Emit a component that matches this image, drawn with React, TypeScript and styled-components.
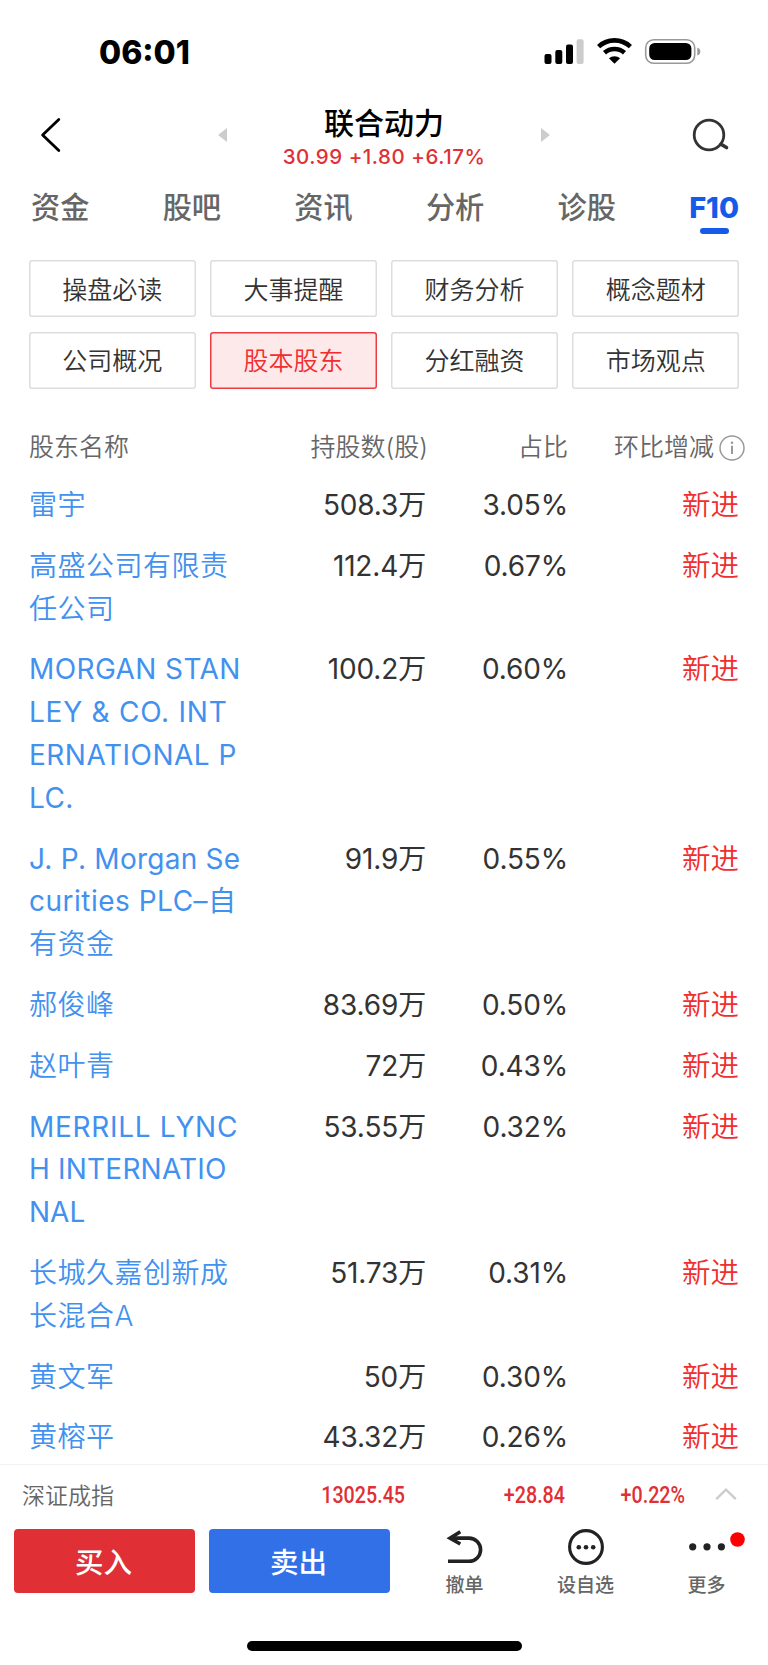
import React from "react";
import styled, { createGlobalStyle } from "styled-components";

const Global = createGlobalStyle`
  * { box-sizing: border-box; }
  body {
    margin: 0;
    background: #fff;
    font-family: Inter, "Noto Sans CJK SC", sans-serif;
    color: #333;
  }
`;

const Screen = styled.div`
  width: 768px;
  height: 1665px;
  display: flex;
  flex-direction: column;
  overflow: hidden;
  white-space: nowrap;
  > * { flex-shrink: 0; }
`;

const StatusBar = styled.header`
  height: 104px;
  padding: 0 67px 0 99px;
  display: flex;
  align-items: center;
  justify-content: space-between;
`;

const Clock = styled.div`
  font-size: 32px;
  font-weight: 800;
  line-height: 40px;
  padding-top: 2px;
  color: #000;
`;

const NavBar = styled.nav`
  height: 70px;
  padding: 0 39px 0 39px;
  display: grid;
  grid-template-columns: 24px 1fr 38px;
  align-items: center;
  > svg { margin-bottom: 8px; }
`;

const Stepper = styled.div`
  width: 332px;
  margin-left: 155px;
  display: flex;
  align-items: center;
  justify-content: space-between;
  > svg { margin-bottom: 8px; }
`;

const Title = styled.div`
  display: flex;
  flex-direction: column;
  align-items: center;
  padding-bottom: 2px;
`;

const StockName = styled.div`
  font-size: 30px;
  font-weight: 500;
  line-height: 38px;
  color: #000;
`;

const Quote = styled.div`
  font-size: 20.5px;
  font-weight: 500;
  line-height: 30px;
  letter-spacing: 0.52px;
  color: #e03035;
`;

const Tabs = styled.div`
  height: 73px;
  padding: 1px 29px 0 31px;
  display: flex;
  justify-content: space-between;
`;

const Tab = styled.div<{ $active?: boolean }>`
  display: flex;
  flex-direction: column;
  align-items: center;
  font-size: ${(p) => (p.$active ? "29px" : "29.2px")};
  font-weight: ${(p) => (p.$active ? 800 : 500)};
  line-height: 66px;
  color: ${(p) => (p.$active ? "#155be8" : "#666")};
`;

const TabMark = styled.span`
  width: 29px;
  height: 6px;
  margin-top: -13px;
  border-radius: 3px;
  background: #155be8;
`;

const Sections = styled.div`
  margin: 13px 29px 0;
  padding-top: 0.3px;
  display: grid;
  grid-template-columns: repeat(4, 1fr);
  grid-auto-rows: 57px;
  gap: 14.5px;
`;

const Section = styled.div<{ $active?: boolean }>`
  display: flex;
  align-items: center;
  justify-content: center;
  padding-bottom: 2px;
  border-radius: 3px;
  font-size: 25px;
  font-weight: 350;
  color: ${(p) => (p.$active ? "#f02d2f" : "#333")};
  background: ${(p) => (p.$active ? "#fee9ea" : "#fff")};
  box-shadow: inset 0 0 0 1.5px ${(p) => (p.$active ? "#ec3c40" : "#ddd")};
`;

const Table = styled.section`
  flex: 1 1 0;
  min-height: 0;
  margin-top: 29.7px;
`;

const Row = styled.div`
  display: grid;
  grid-template-columns: 230px 167px 142px 171px;
  padding: 9px 0 9px 29px;
  font-size: 28.5px;
  font-weight: 350;
  line-height: 42.8px;
`;

const HeadRow = styled(Row)`
  height: 56.6px;
  padding-top: 8px;
  font-size: 25px;
  color: #666;
`;

const Cell = styled.div`
  text-align: right;
`;

const SharesHead = styled(Cell)`
  margin-right: -2px;
`;

const Figure = styled(Cell)`
  font-size: 28px;
  font-weight: 400;
  letter-spacing: -0.15px;
`;

const HeadLast = styled.div`
  display: flex;
  align-items: center;
  gap: 5px;
  padding-left: 46px;
  svg { flex-shrink: 0; }
`;

const Name = styled.div`
  color: #4291ef;
  font-size: 28px;
`;

const NameLine = styled.div<{ $track: number; $latin: boolean }>`
  font-weight: ${(p) => (p.$latin ? 400 : 350)};
  letter-spacing: ${(p) => p.$track}px;
`;

const Change = styled(Cell)`
  color: #f02d2f;
`;

const IndexBar = styled.div`
  height: 65px;
  border-top: 1px solid #f2f2f2;
  padding: 0 31px 6px 22px;
  display: grid;
  grid-template-columns: 220px 163px 160px 120px 1fr;
  align-items: center;
  font-size: 23px;
  font-weight: 350;
  color: #666;
  svg { justify-self: end; }
`;

const IndexValue = styled.div`
  font-family: Roboto, sans-serif;
  font-size: 24px;
  font-weight: 500;
  line-height: 30px;
  padding-top: 1px;
  text-align: right;
  color: #e03035;
  transform: scaleX(0.82);
  transform-origin: right center;
`;

const ActionBar = styled.div`
  height: 64px;
  padding-left: 14px;
  display: flex;
`;

const Trade = styled.div<{ $color: string }>`
  width: 181px;
  margin-right: 14px;
  padding: 0 2px 1px 0;
  display: flex;
  align-items: center;
  justify-content: center;
  border-radius: 4px;
  background: ${(p) => p.$color};
  color: #fff;
  font-size: 28.5px;
  font-weight: 500;
`;

const Tools = styled.div`
  flex: 1;
  display: grid;
  grid-template-columns: 121px 121px 121px;
`;

const Tool = styled.div`
  display: flex;
  flex-direction: column;
  align-items: center;
  font-size: 19px;
  font-weight: 500;
  line-height: 41px;
  color: #666;
  svg { display: block; overflow: visible; }
`;

const HomeArea = styled.footer`
  height: 72px;
  display: flex;
  justify-content: center;
  padding-top: 48px;
`;

const HomeIndicator = styled.div`
  width: 275px;
  height: 10px;
  border-radius: 5px;
  background: #000;
`;

const StatusIcons = () => (
  <svg width="157" height="28" viewBox="0 0 157 28">
    <rect x="0.5" y="16" width="7" height="10" rx="2" />
    <rect x="11.3" y="12" width="7" height="14" rx="2" />
    <rect x="22" y="6.5" width="7" height="19.5" rx="2" />
    <rect x="32.6" y="1.3" width="7" height="24.7" rx="2" fill="#ccc" />
    <g fill="none" stroke="#000" strokeWidth="4.6">
      <path d="M54.6 8.6 A23.5 23.5 0 0 1 86.4 8.6" />
      <path d="M60.5 14.8 A15 15 0 0 1 80.5 14.8" />
    </g>
    <path d="M70.5 25.8 L64.9 20.3 A8.5 8.5 0 0 1 76.1 20.3 Z" />
    <rect x="101.7" y="1.7" width="49" height="23.6" rx="8" fill="none" stroke="#999" strokeWidth="1.6" />
    <rect x="105.2" y="4.9" width="42.2" height="17.2" rx="5.5" />
    <path d="M153.3 9.5 Q156.3 10.5 156.3 13.5 T153.3 17.5 Z" fill="#999" />
  </svg>
);

const BackIcon = () => (
  <svg width="24" height="38" viewBox="0 0 24 38" fill="none" stroke="#000" strokeWidth="2.8" strokeLinecap="round" strokeLinejoin="round">
    <path d="M19.8 3.4 L3.6 19 L19.8 34.6" />
  </svg>
);

const ArrowIcon = ({ flip }: { flip?: boolean }) => (
  <svg width="9" height="14" viewBox="0 0 9 14" fill="#ccc">
    <path d={flip ? "M0 0 L9 7 L0 14 Z" : "M9 0 L0 7 L9 14 Z"} />
  </svg>
);

const SearchIcon = () => (
  <svg width="38" height="36" viewBox="0 0 38 36" fill="none" stroke="#333" strokeWidth="2.8" strokeLinecap="round">
    <circle cx="18" cy="18" r="14.8" />
    <path d="M30 27.3 L35.5 30.5" strokeWidth="3.6" />
  </svg>
);

const InfoIcon = () => (
  <svg width="26" height="26" viewBox="0 0 26 26" fill="none" stroke="#999" strokeWidth="1.5">
    <circle cx="13" cy="13" r="12" />
    <path d="M13 10.8 V19" strokeWidth="2" />
    <circle cx="13" cy="7.7" r="1.3" fill="#999" stroke="none" />
  </svg>
);

const ChevronIcon = () => (
  <svg width="22" height="14" viewBox="0 0 22 14" fill="none" stroke="#ccc" strokeWidth="2.4">
    <path d="M1.2 12.2 L11 2.6 L20.8 12.2" />
  </svg>
);

const UndoIcon = () => (
  <svg width="36" height="36" viewBox="0 0 36 36" fill="none" stroke="#222" strokeWidth="3.6">
    <path d="M1 32.3 H22 A11.6 11.6 0 0 0 22 9.1 H3" />
    <path d="M13.3 2.8 L3 9.1 L13.3 15" />
  </svg>
);

const WatchIcon = () => (
  <svg width="36" height="36" viewBox="0 0 36 36" fill="#222">
    <circle cx="18" cy="18" r="16.4" fill="none" stroke="#222" strokeWidth="3.1" />
    <circle cx="10.8" cy="18.2" r="2.3" />
    <circle cx="18" cy="18.2" r="2.3" />
    <circle cx="25.2" cy="18.2" r="2.3" />
  </svg>
);

const MoreIcon = () => (
  <svg width="36" height="36" viewBox="0 0 36 36" fill="#222">
    <circle cx="3.7" cy="17.8" r="3.6" />
    <circle cx="18" cy="17.8" r="3.6" />
    <circle cx="32.4" cy="17.8" r="3.6" />
    <circle cx="48.5" cy="10.5" r="7.3" fill="#f00" />
  </svg>
);

const tabs = ["资金", "股吧", "资讯", "分析", "诊股"];
const sections = ["操盘必读", "大事提醒", "财务分析", "概念题材", "公司概况", "股本股东", "分红融资", "市场观点"];

type Line = [text: string, track: number];
type Holder = { name: Line[]; shares: string; ratio: string };

const holders: Holder[] = [
  { name: [["雷宇", 0.5]], shares: "508.3万", ratio: "3.05%" },
  { name: [["高盛公司有限责", 0.5], ["任公司", 0.5]], shares: "112.4万", ratio: "0.67%" },
  { name: [["MORGAN STAN", 0.4], ["LEY & CO. INT", 0.75], ["ERNATIONAL P", 0.5], ["LC.", 0.4]], shares: "100.2万", ratio: "0.60%" },
  { name: [["J. P. Morgan Se", 0.25], ["curities PLC–自", 0.5], ["有资金", 0.5]], shares: "91.9万", ratio: "0.55%" },
  { name: [["郝俊峰", 0.5]], shares: "83.69万", ratio: "0.50%" },
  { name: [["赵叶青", 0.5]], shares: "72万", ratio: "0.43%" },
  { name: [["MERRILL LYNC", 0.7], ["H INTERNATIO", 0.2], ["NAL", 0]], shares: "53.55万", ratio: "0.32%" },
  { name: [["长城久嘉创新成", 0.5], ["长混合A", 0.5]], shares: "51.73万", ratio: "0.31%" },
  { name: [["黄文军", 0.5]], shares: "50万", ratio: "0.30%" },
  { name: [["黄榕平", 0.5]], shares: "43.32万", ratio: "0.26%" },
];

export default function App() {
  return (
    <Screen>
      <Global />
      <StatusBar>
        <Clock>06:01</Clock>
        <StatusIcons />
      </StatusBar>
      <NavBar>
        <BackIcon />
        <Stepper>
          <ArrowIcon />
          <Title>
            <StockName>联合动力</StockName>
            <Quote>30.99 +1.80 +6.17%</Quote>
          </Title>
          <ArrowIcon flip />
        </Stepper>
        <SearchIcon />
      </NavBar>
      <Tabs>
        {tabs.map((t) => (
          <Tab key={t}>{t}</Tab>
        ))}
        <Tab $active>
          F10
          <TabMark />
        </Tab>
      </Tabs>
      <Sections>
        {sections.map((s) => (
          <Section key={s} $active={s === "股本股东"}>{s}</Section>
        ))}
      </Sections>
      <Table>
        <HeadRow>
          <div>股东名称</div>
          <SharesHead>持股数(股)</SharesHead>
          <Cell>占比</Cell>
          <HeadLast>
            环比增减
            <InfoIcon />
          </HeadLast>
        </HeadRow>
        {holders.map((h) => (
          <Row key={h.shares}>
            <Name>
              {h.name.map(([text, track]) => (
                <NameLine key={text} $track={track} $latin={/^[A-Za-z]/.test(text)}>{text}</NameLine>
              ))}
            </Name>
            <Figure>{h.shares}</Figure>
            <Figure>{h.ratio}</Figure>
            <Change>新进</Change>
          </Row>
        ))}
      </Table>
      <IndexBar>
        <div>深证成指</div>
        <IndexValue>13025.45</IndexValue>
        <IndexValue>+28.84</IndexValue>
        <IndexValue>+0.22%</IndexValue>
        <ChevronIcon />
      </IndexBar>
      <ActionBar>
        <Trade $color="#e03035">买入</Trade>
        <Trade $color="#3270e8">卖出</Trade>
        <Tools>
          <Tool>
            <UndoIcon />
            撤单
          </Tool>
          <Tool>
            <WatchIcon />
            设自选
          </Tool>
          <Tool>
            <MoreIcon />
            更多
          </Tool>
        </Tools>
      </ActionBar>
      <HomeArea>
        <HomeIndicator />
      </HomeArea>
    </Screen>
  );
}
